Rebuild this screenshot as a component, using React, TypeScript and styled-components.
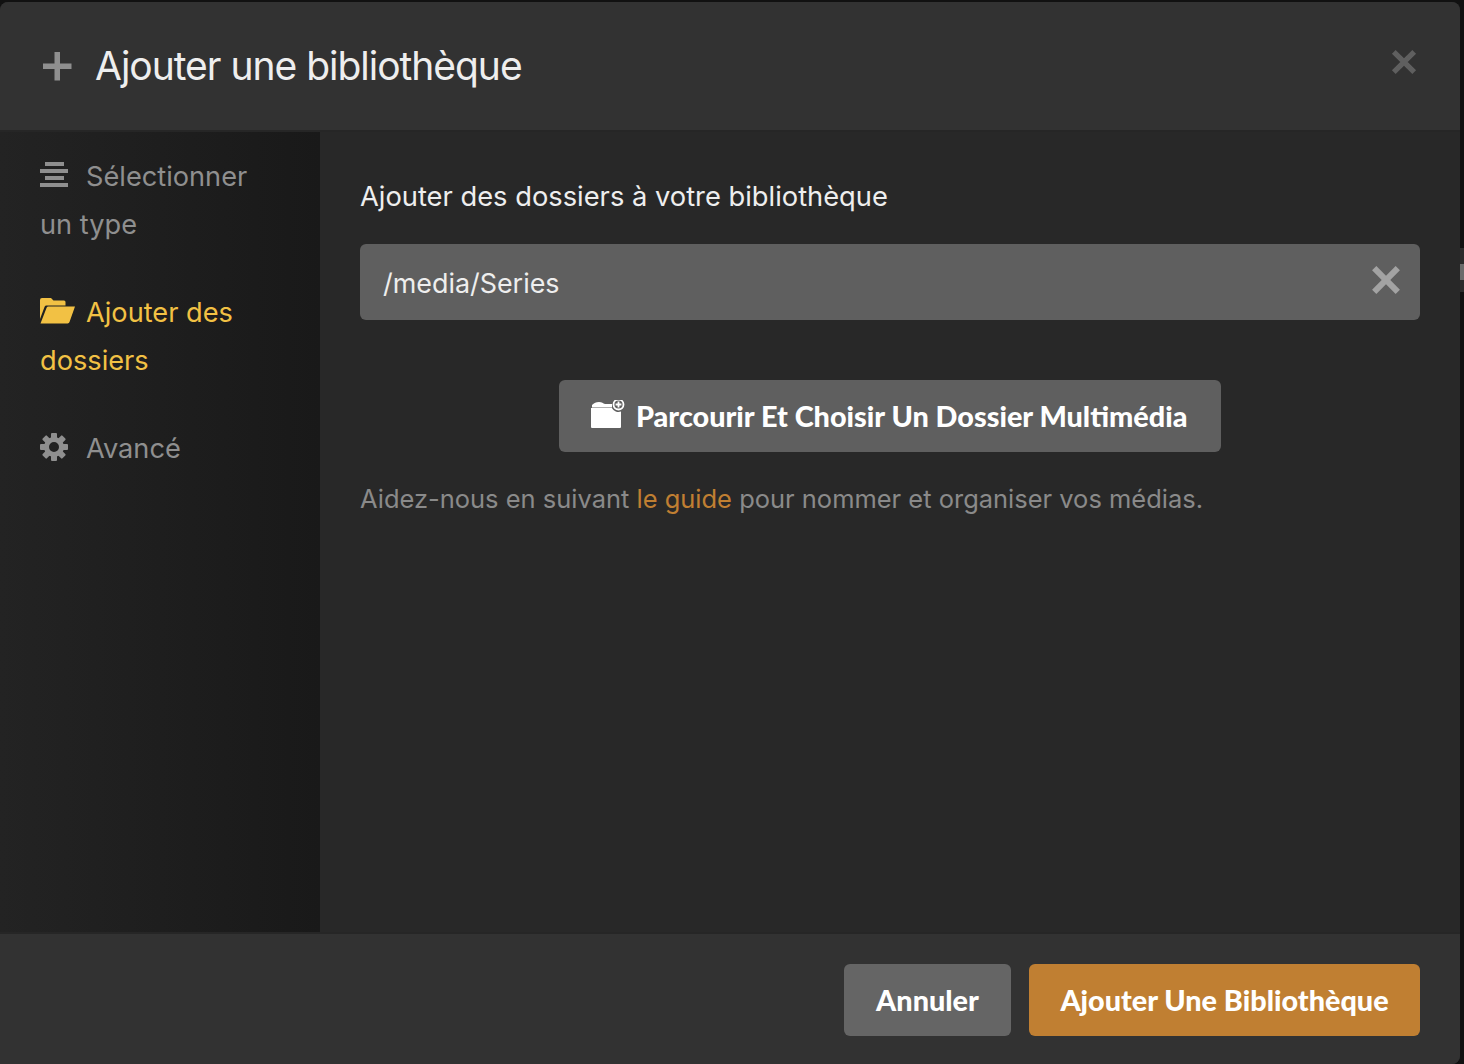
import React from 'react'
import styled, { createGlobalStyle } from 'styled-components'

const GlobalStyle = createGlobalStyle`
  html, body {
    margin: 0;
    padding: 0;
    background: #111111;
  }
  * {
    box-sizing: border-box;
  }
`

const Page = styled.div`
  width: 1464px;
  height: 1064px;
  padding: 2px 4px 0 0;
  position: relative;
  overflow: hidden;
  font-family: Inter, 'Liberation Sans', sans-serif;
`

const Modal = styled.div`
  height: 1062px;
  display: flex;
  flex-direction: column;
  background: #282828;
  border-radius: 8px 8px 8px 0;
  overflow: hidden;
`

const Header = styled.header`
  height: 130px;
  flex: none;
  display: flex;
  align-items: center;
  justify-content: space-between;
  padding: 0 40px 0 42px;
  background: #323232;
  border-bottom: 2px solid #262626;
`

const TitleGroup = styled.div`
  display: flex;
  align-items: center;
  gap: 23px;
`

const Title = styled.h1`
  margin: 0;
  font-size: 39px;
  line-height: 48px;
  font-weight: 400;
  letter-spacing: -1.02px;
  color: #eeeeee;
`

const CloseButton = styled.button`
  width: 40px;
  height: 40px;
  margin: 0;
  padding: 0;
  border: 0;
  background: none;
  color: #5f5f5f;
  display: flex;
  align-items: center;
  justify-content: center;
  transform: translate(4px, -4px);
`

const Body = styled.div`
  flex: 1;
  min-height: 0;
  display: flex;
`

const Sidebar = styled.nav`
  width: 320px;
  flex: none;
  padding: 21px 40px 0;
  background: linear-gradient(90deg, #232323 0%, #191919 100%);
`

const NavItem = styled.div<{ $active?: boolean }>`
  margin-bottom: 40px;
  font-size: 27.2px;
  line-height: 48px;
  color: ${p => (p.$active ? '#f2c144' : '#8f8f8f')};
`

const NavIcon = styled.span`
  display: inline-block;
  width: 46px;
  height: 28px;
  vertical-align: -3px;
  svg {
    display: block;
  }
`

const Content = styled.main`
  flex: 1;
  padding: 41px 40px 40px;
`

const SectionTitle = styled.h2`
  margin: 0 0 23px;
  font-size: 27.3px;
  line-height: 48px;
  font-weight: 400;
  color: #eeeeee;
`

const PathRow = styled.div`
  height: 76px;
  display: flex;
  align-items: center;
  justify-content: space-between;
  padding: 2px 19px 0 23px;
  border-radius: 6px;
  background: #5f5f5f;
  font-size: 26.9px;
  color: #eeeeee;
`

const ClearIcon = styled.span`
  display: flex;
  color: #a3a3a3;
  transform: translateY(-3px);
`

const BrowseRow = styled.div`
  display: flex;
  justify-content: center;
  margin-top: 60px;
`

const Button = styled.button<{ $primary?: boolean }>`
  height: 72px;
  margin: 0;
  border: 0;
  border-radius: 6px;
  display: flex;
  align-items: center;
  background: ${p => (p.$primary ? '#c07f32' : '#656565')};
  color: #ffffff;
  font-family: Lato, Inter, sans-serif;
  font-size: 28.8px;
  font-weight: 900;
  white-space: nowrap;
`

const BrowseButton = styled(Button)`
  width: 662px;
  padding: 0 32px;
  gap: 11px;
  background: #5f5f5f;
`

const Hint = styled.p`
  margin: 23px 0 0;
  font-size: 25.47px;
  line-height: 48px;
  color: #8a8a8a;
`

const GuideLink = styled.a`
  color: #c07f32;
  text-decoration: none;
`

const Footer = styled.footer`
  height: 132px;
  flex: none;
  display: flex;
  justify-content: flex-end;
  align-items: flex-start;
  gap: 18px;
  padding: 30px 40px 0;
  background: #323232;
  border-top: 2px solid #262626;
`

const CancelButton = styled(Button)`
  width: 167px;
  justify-content: center;
`

const SubmitButton = styled(Button)`
  width: 391px;
  justify-content: center;
`

const ScrollEdge = styled.div`
  position: absolute;
  right: 0;
  top: 248px;
  width: 4px;
  height: 44px;
  background: #2c2c2c;
  &::after {
    content: '';
    position: absolute;
    left: 0;
    top: 16px;
    width: 4px;
    height: 16px;
    background: #6b6b6b;
  }
`

const PlusIcon = () => (
  <svg width="30" height="30" viewBox="0 0 30 30" fill="#8f8f8f">
    <path d="M12.500 1h5.500v11.500h11.500v5.500H18v11.500h-5.500V18H1v-5.500h11.500z" />
  </svg>
)

const CrossIcon = ({ size }: { size: number }) => (
  <svg width={size} height={size} viewBox="0 0 28 28" fill="currentColor">
    <path d="M5 1 14 10 23 1 27 5 18 14 27 23 23 27 14 18 5 27 1 23 10 14 1 5z" />
  </svg>
)

const ListIcon = () => (
  <svg width="28" height="28" viewBox="0 0 28 28" fill="#8f8f8f">
    <rect x="5" y="1" width="19" height="4" />
    <rect x="0" y="8" width="28" height="4" />
    <rect x="5" y="15" width="19" height="4" />
    <rect x="0" y="22" width="28" height="4" />
  </svg>
)

const FolderOpenIcon = () => (
  <svg width="36" height="28" viewBox="0 0 36 28" fill="#f2c144">
    <path d="M0 3a2 2 0 0 1 2-2h9l2.500 2.500H24a1.500 1.500 0 0 1 1.500 1.500v3.500H6.500a2 2 0 0 0-1.900 1.300L0 22z" />
    <path d="M8.500 9.500H35L29.500 25a2 2 0 0 1-1.900 1.500H0.500L6.600 10.800a2 2 0 0 1 1.900-1.300z" />
  </svg>
)

const GEAR_TEETH = [0, 45, 90, 135, 180, 225, 270, 315]

const GearIcon = () => (
  <svg width="28" height="28" viewBox="0 0 28 28" fill="#8f8f8f">
    {GEAR_TEETH.map(angle => (
      <rect key={angle} x="11" y="0" width="6" height="7" rx="1" transform={`rotate(${angle} 14 14)`} />
    ))}
    <circle cx="14" cy="14" r="7.500" fill="none" stroke="#8f8f8f" strokeWidth="5" />
  </svg>
)

const FolderPlusIcon = () => (
  <svg width="34" height="32" viewBox="0 0 34 32" fill="#ffffff">
    <path d="M1 5C3 3 5 2 8 2c3 0 4 1.500 6 2h7v3.500H1z" />
    <path d="M0 8h20.900A7.500 7.500 0 0 0 30 11.600V27a1 1 0 0 1-1 1H1a1 1 0 0 1-1-1z" />
    <circle cx="27.500" cy="4.500" r="5" fill="none" stroke="#ffffff" strokeWidth="1.800" />
    <path d="M26.600 1.600h1.800v2h2v1.800h-2v2h-1.800v-2h-2V3.600h2z" />
  </svg>
)

export default function App() {
  return (
    <Page>
      <GlobalStyle />
      <Modal>
        <Header>
          <TitleGroup>
            <PlusIcon />
            <Title>Ajouter une bibliothèque</Title>
          </TitleGroup>
          <CloseButton>
            <CrossIcon size={26} />
          </CloseButton>
        </Header>
        <Body>
          <Sidebar>
            <NavItem>
              <NavIcon>
                <ListIcon />
              </NavIcon>
              Sélectionner un type
            </NavItem>
            <NavItem $active>
              <NavIcon>
                <FolderOpenIcon />
              </NavIcon>
              Ajouter des dossiers
            </NavItem>
            <NavItem>
              <NavIcon>
                <GearIcon />
              </NavIcon>
              Avancé
            </NavItem>
          </Sidebar>
          <Content>
            <SectionTitle>Ajouter des dossiers à votre bibliothèque</SectionTitle>
            <PathRow>
              /media/Series
              <ClearIcon>
                <CrossIcon size={30} />
              </ClearIcon>
            </PathRow>
            <BrowseRow>
              <BrowseButton>
                <FolderPlusIcon />
                Parcourir Et Choisir Un Dossier Multimédia
              </BrowseButton>
            </BrowseRow>
            <Hint>
              Aidez-nous en suivant <GuideLink>le guide</GuideLink> pour nommer et organiser vos médias.
            </Hint>
          </Content>
        </Body>
        <Footer>
          <CancelButton>Annuler</CancelButton>
          <SubmitButton $primary>Ajouter Une Bibliothèque</SubmitButton>
        </Footer>
      </Modal>
      <ScrollEdge />
    </Page>
  )
}
